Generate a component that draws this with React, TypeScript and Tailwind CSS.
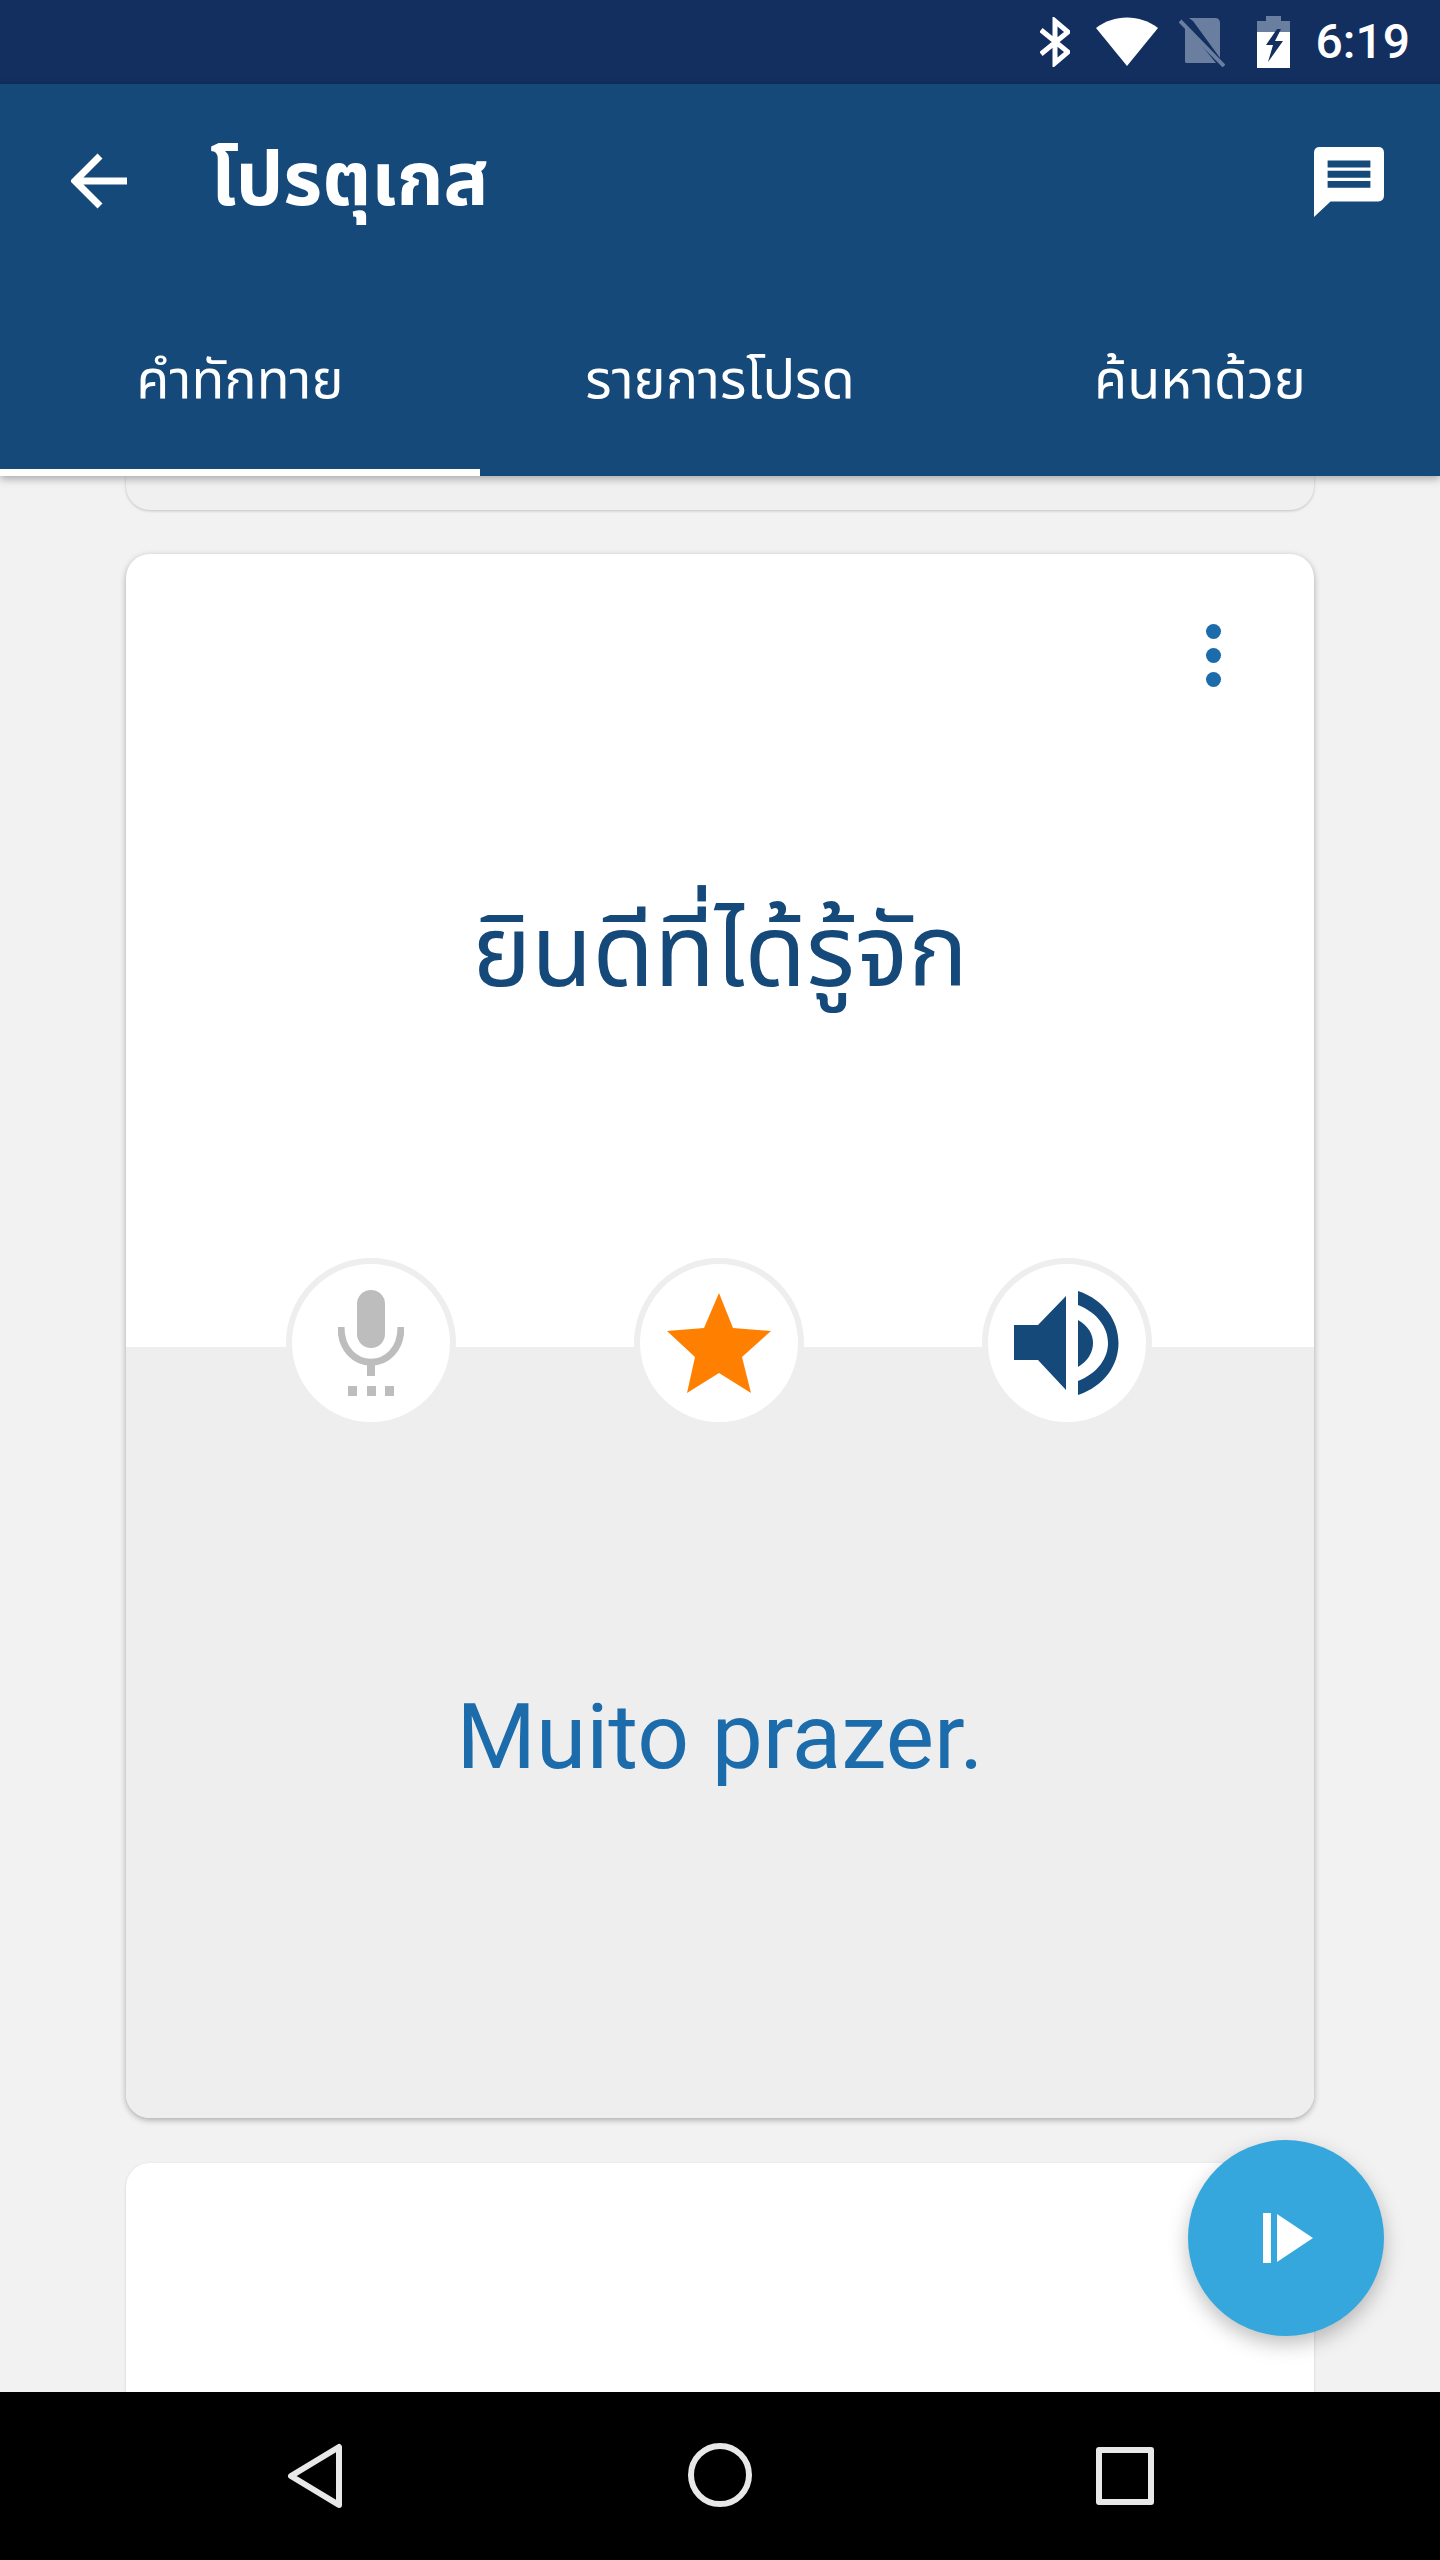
const thai = "font-['Noto_Sans_Thai','Noto_Sans','DejaVu_Sans',Roboto,sans-serif]";

function StatusBar() {
  return (
    <div className="flex h-[84px] shrink-0 items-center justify-end bg-[#132f5f] pr-[30px] text-white">
      <svg width="30" height="50" viewBox="0 0 30 50" className="mr-[26px]" fill="none" stroke="white" strokeWidth="5">
        <path d="M1 13 L28 35 L15 46 V4 L28 15 L1 37" />
      </svg>
      <svg width="62" height="50" viewBox="0 0 62 50" className="mr-[21px]" fill="white">
        <path d="M0 11 C18 -3 44 -3 62 11 L31 49 Z" />
      </svg>
      <svg width="46" height="50" viewBox="0 0 46 50" className="mr-[32px]" fill="#6a7e9f">
        <path d="M10 1 H36 Q41 1 41 6 V41 L14 4 Z M6 8 L37 46 H7 Q6 46 6 44 Z" />
        <path d="M1 4 L45 49" stroke="#6a7e9f" strokeWidth="4" />
      </svg>
      <svg width="33" height="52" viewBox="0 0 33 52" className="mr-[26px]">
        <path d="M9 0 H24 V5 H33 V16 H0 V5 H9 Z" fill="#6a7e9f" />
        <path d="M0 16 H33 V52 H0 Z" fill="white" />
        <path d="M20 13 L9 29 H16 L11 46 L26 25 H18 L24 13 Z" fill="#132f5f" />
      </svg>
      <span className="font-['Roboto',sans-serif] text-[48px] leading-none font-medium">6:19</span>
    </div>
  );
}

function Header() {
  return (
    <div className="relative z-10 shrink-0 bg-[#14497a] shadow-[0_3px_8px_rgba(0,0,0,0.3)]">
      <div className="flex h-[184px] items-center pr-[56px] pl-[71px] text-white">
        <svg width="56" height="56" viewBox="0 0 56 56" className="mt-[10px]" fill="none" stroke="white" strokeWidth="7">
          <path d="M56 28 H5 M29 3 L4 28 L29 53" />
        </svg>
        <h1 className={`${thai} ml-[83px] mt-[13px] flex-1 text-[75px] leading-none font-bold`}>โปรตุเกส</h1>
        <svg width="70" height="70" viewBox="0 0 72 72" className="mt-[12px]">
          <path d="M6 0 H66 Q72 0 72 6 V50 Q72 56 66 56 H17 L0 72 V6 Q0 0 6 0 Z" fill="white" />
          <path d="M14 14 H58 V21 H14 Z M14 24.5 H58 V31.5 H14 Z M14 35 H58 V42 H14 Z" fill="#14497a" />
        </svg>
      </div>
      <div className={`${thai} flex h-[208px] text-[54px] leading-none text-white`}>
        <div className="flex w-[480px] items-center justify-center border-b-[7px] border-white pt-[26px]">คำทักทาย</div>
        <div className="flex w-[480px] items-center justify-center border-b-[7px] border-transparent pt-[26px]">รายการโปรด</div>
        <div className="flex w-[480px] items-center justify-center border-b-[7px] border-transparent pt-[26px]">ค้นหาด้วย</div>
      </div>
    </div>
  );
}

function RoundAction({ children }: { children: React.ReactNode }) {
  return (
    <div className="flex h-[170px] w-[170px] items-center justify-center rounded-full border-[6px] border-[#eeeeee] bg-white">
      {children}
    </div>
  );
}

function PhraseCard() {
  return (
    <div className="relative mx-[126px] mt-[44px] h-[1564px] shrink-0 overflow-hidden rounded-[24px] bg-white shadow-[0_2px_6px_rgba(0,0,0,0.3)]">
      <div className="flex h-[793px] flex-col items-center">
        <div className="flex w-full justify-end pt-[70px] pr-[93px]">
          <div className="flex flex-col gap-[9px]">
            <span className="h-[15px] w-[15px] rounded-full bg-[#1c6bab]" />
            <span className="h-[15px] w-[15px] rounded-full bg-[#1c6bab]" />
            <span className="h-[15px] w-[15px] rounded-full bg-[#1c6bab]" />
          </div>
        </div>
        <p className={`${thai} mt-[219px] text-[100px] leading-none text-[#14497a]`}>ยินดีที่ได้รู้จัก</p>
      </div>
      <div className="flex h-[771px] items-start justify-center bg-[#eeeeee] pt-[345px]">
        <p className="font-['Roboto',sans-serif] text-[91px] leading-none text-[#1c6bab]">Muito prazer.</p>
      </div>
      <div className="absolute top-[704px] left-[160px] flex w-[866px] justify-between">
        <RoundAction>
          <svg width="66" height="106" viewBox="0 0 66 106">
            <rect x="19" y="0" width="28" height="58" rx="14" fill="#bdbdbd" />
            <path d="M3 37 C3 84 63 84 63 37" fill="none" stroke="#bdbdbd" strokeWidth="7" />
            <path d="M29 70 H37 V86 H29 Z M10 96 H19 V106 H10 Z M29 96 H38 V106 H29 Z M47 96 H56 V106 H47 Z" fill="#bdbdbd" />
          </svg>
        </RoundAction>
        <RoundAction>
          <svg width="104" height="100" viewBox="0 0 104 100">
            <path d="M52 0 L66 35 L104 38 L75 64 L84 100 L52 80 L20 100 L28 64 L0 38 L37 35 Z" fill="#ff8000" />
          </svg>
        </RoundAction>
        <RoundAction>
          <svg width="106" height="104" viewBox="0 0 106 104">
            <path d="M0 34 H24 L52 5 V99 L24 69 H0 Z" fill="#14497a" />
            <path d="M64 0 C118 18 118 86 64 104 V90 C104 74 104 30 64 14 Z" fill="#14497a" />
            <path d="M64 29 C84 40 84 64 64 76 Z" fill="#14497a" />
          </svg>
        </RoundAction>
      </div>
    </div>
  );
}

function NavBar() {
  return (
    <div className="relative z-10 flex h-[168px] shrink-0 items-center justify-center bg-black">
      <div className="grid w-[1215px] grid-cols-3 justify-items-center">
        <svg width="56" height="66" viewBox="0 0 56 66" fill="none" stroke="#e8e8e8" strokeWidth="6" strokeLinejoin="round">
          <path d="M52 4 V62 L4 33 Z" />
        </svg>
        <span className="h-[64px] w-[64px] rounded-full border-[6px] border-[#e8e8e8]" />
        <span className="h-[58px] w-[58px] self-center rounded-[3px] border-[6px] border-[#e8e8e8]" />
      </div>
    </div>
  );
}

export default function App() {
  return (
    <div className="relative flex h-[2560px] w-[1440px] flex-col overflow-hidden bg-[#f2f2f2]">
      <StatusBar />
      <Header />
      <div className="flex min-h-0 flex-1 flex-col overflow-hidden">
        <div className="mx-[126px] h-[34px] shrink-0 rounded-b-[24px] bg-[#f0f0f0] shadow-[0_1px_3px_rgba(0,0,0,0.2)]" />
        <PhraseCard />
        <div className="mx-[126px] mt-[45px] flex-1 rounded-t-[24px] bg-white shadow-[0_1px_3px_rgba(0,0,0,0.15)]" />
      </div>
      <NavBar />
      <button className="absolute top-[2140px] left-[1188px] z-20 flex h-[196px] w-[196px] items-center justify-center rounded-full bg-[#35a7dc] shadow-[0_8px_20px_rgba(0,0,0,0.25)]">
        <svg width="50" height="50" viewBox="0 0 50 50" fill="white" className="ml-[3px]">
          <path d="M0 0 H8 V50 H0 Z M14 1 L50 25 L14 49 Z" />
        </svg>
      </button>
    </div>
  );
}
